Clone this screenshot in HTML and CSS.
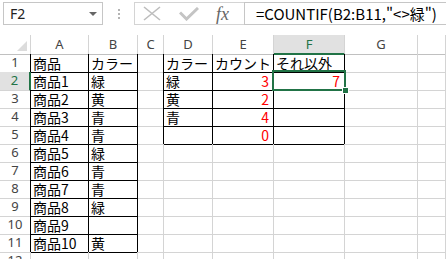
FILE: index.html
```html
<!DOCTYPE html>
<html lang="ja">
<head>
    <meta charset="UTF-8">
    <title>COUNTIF</title>
    <link rel="stylesheet" href="styles.css">
</head>
<body>
    <div class="toolbar">
        <div class="namebox">
            <span>F2</span>
            <svg width="8" height="4" viewBox="0 0 8 4"><path d="M0 0H8L4 4Z" fill="#666"/></svg>
        </div>
        <div class="grip">
            <svg width="2" height="10" viewBox="0 0 2 10"><rect y="0" width="2" height="2" fill="#b4b4b4"/><rect y="4" width="2" height="2" fill="#b4b4b4"/><rect y="8" width="2" height="2" fill="#b4b4b4"/></svg>
        </div>
        <div class="fbuttons">
            <svg class="btn-x" width="18" height="15" viewBox="0 0 18 15"><path d="M1 1L17 14M17 1L1 14" stroke="#bdbdbd" stroke-width="1.6" fill="none"/></svg>
            <svg class="btn-ok" width="20" height="14" viewBox="0 0 20 14"><path d="M1 5.5L7.5 12L19 1" stroke="#c4c4c4" stroke-width="3" fill="none"/></svg>
            <span class="fx">fx</span>
        </div>
        <div class="formula">=COUNTIF(B2:B11,"&lt;&gt;緑")</div>
    </div>

    <div class="sheet">
        <div class="row head">
            <div class="rh corner"><svg width="10" height="10" viewBox="0 0 10 10"><path d="M10 0V10H0Z" fill="#dcdcdc"/></svg></div>
            <div class="ch">A</div><div class="ch">B</div><div class="ch">C</div><div class="ch">D</div>
            <div class="ch">E</div><div class="ch on">F</div><div class="ch">G</div><div class="ch"></div>
        </div>
        <div class="row">
            <div class="rh kr">1</div>
            <div class="c k">商品</div><div class="c k">カラー</div><div class="c kr"></div>
            <div class="c k">カラー</div><div class="c k">カウント</div><div class="c k">それ以外</div>
            <div class="c"></div><div class="c"></div>
        </div>
        <div class="row">
            <div class="rh on">2</div>
            <div class="c k">商品1</div><div class="c k">緑</div><div class="c kr"></div>
            <div class="c k">緑</div><div class="c k num">3</div>
            <div class="c k num cur">7<span class="sel"><span class="handle"></span></span></div>
            <div class="c"></div><div class="c"></div>
        </div>
        <div class="row">
            <div class="rh kr">3</div>
            <div class="c k">商品2</div><div class="c k">黄</div><div class="c kr"></div>
            <div class="c k">黄</div><div class="c k num">2</div><div class="c k"></div>
            <div class="c"></div><div class="c"></div>
        </div>
        <div class="row">
            <div class="rh kr">4</div>
            <div class="c k">商品3</div><div class="c k">青</div><div class="c kr"></div>
            <div class="c k">青</div><div class="c k num">4</div><div class="c k"></div>
            <div class="c"></div><div class="c"></div>
        </div>
        <div class="row">
            <div class="rh kr">5</div>
            <div class="c k">商品4</div><div class="c k">青</div><div class="c kr"></div>
            <div class="c k"></div><div class="c k num">0</div><div class="c k"></div>
            <div class="c"></div><div class="c"></div>
        </div>
        <div class="row">
            <div class="rh kr">6</div>
            <div class="c k">商品5</div><div class="c k">緑</div><div class="c"></div>
            <div class="c"></div><div class="c"></div><div class="c"></div><div class="c"></div><div class="c"></div>
        </div>
        <div class="row">
            <div class="rh kr">7</div>
            <div class="c k">商品6</div><div class="c k">青</div><div class="c"></div>
            <div class="c"></div><div class="c"></div><div class="c"></div><div class="c"></div><div class="c"></div>
        </div>
        <div class="row">
            <div class="rh kr">8</div>
            <div class="c k">商品7</div><div class="c k">青</div><div class="c"></div>
            <div class="c"></div><div class="c"></div><div class="c"></div><div class="c"></div><div class="c"></div>
        </div>
        <div class="row">
            <div class="rh kr">9</div>
            <div class="c k">商品8</div><div class="c k">緑</div><div class="c"></div>
            <div class="c"></div><div class="c"></div><div class="c"></div><div class="c"></div><div class="c"></div>
        </div>
        <div class="row">
            <div class="rh kr">10</div>
            <div class="c k">商品9</div><div class="c k"></div><div class="c"></div>
            <div class="c"></div><div class="c"></div><div class="c"></div><div class="c"></div><div class="c"></div>
        </div>
        <div class="row">
            <div class="rh kr">11</div>
            <div class="c k">商品10</div><div class="c k">黄</div><div class="c"></div>
            <div class="c"></div><div class="c"></div><div class="c"></div><div class="c"></div><div class="c"></div>
        </div>
        <div class="row">
            <div class="rh">12</div>
            <div class="c"></div><div class="c"></div><div class="c"></div>
            <div class="c"></div><div class="c"></div><div class="c"></div><div class="c"></div><div class="c"></div>
        </div>
    </div>
</body>
</html>
```

FILE: styles.css
```css
body {
    margin: 0;
    width: 446px;
    height: 259px;
    overflow: hidden;
    background-color: #fff;
    font-family: "Noto Sans CJK JP", sans-serif;
    color: #000;
}

/* formula bar */
.toolbar {
    display: flex;
    align-items: flex-start;
    height: 35px;
    padding-top: 2px;
    box-sizing: border-box;
}
.namebox {
    margin-left: 3px;
    width: 100px;
    height: 23px;
    border: 1px solid #c6c6c6;
    box-sizing: border-box;
    display: flex;
    align-items: center;
    justify-content: space-between;
    padding: 0 5px 0 6px;
    font-family: "Noto Sans", sans-serif;
    font-size: 14px;
    color: #222;
}
.grip {
    width: 31px;
    height: 23px;
    display: flex;
    align-items: center;
    justify-content: center;
}
.fbuttons {
    width: 110px;
    height: 23px;
    border: 1px solid #d4d4d4;
    border-right: none;
    box-sizing: border-box;
    display: flex;
    align-items: center;
    padding-left: 8px;
}
.btn-x {
    margin-right: 18px;
}
.btn-ok {
    margin-right: 17px;
    margin-top: 1px;
}
.fx {
    font-family: "Liberation Serif", serif;
    font-style: italic;
    font-size: 18px;
    color: #666;
    line-height: 18px;
}
.formula {
    flex: 1;
    height: 23px;
    border: 1px solid #c6c6c6;
    border-right: none;
    box-sizing: border-box;
    padding-left: 11px;
    font-size: 15px;
    line-height: 21px;
    white-space: nowrap;
}

/* grid */
.row {
    display: grid;
    grid-template-columns: 31px 58px 49px 26px 49px 61px 71px 73px 1fr;
    height: 18px;
}
.row.head {
    height: 19px;
}
.row > div {
    box-sizing: border-box;
    border-right: 1px solid #d4d4d4;
    border-bottom: 1px solid #d4d4d4;
}
.head > div {
    border-bottom-color: #c0c0c0;
}
.rh, .ch {
    font-family: "Noto Sans", sans-serif;
    font-size: 13px;
    color: #444;
    text-align: center;
    line-height: 17px;
}
.ch {
    line-height: 18px;
}
.corner {
    display: flex;
    align-items: flex-end;
    justify-content: flex-end;
    padding: 0 3px 3px 0;
}
.ch.on {
    background-color: #e1e1e1;
    color: #217346;
    border-bottom: 2px solid #217346;
}
.rh.on {
    background-color: #e1e1e1;
    color: #217346;
    border-right: 2px solid #217346;
}
.c {
    font-size: 14px;
    line-height: 18px;
    padding-left: 2px;
    white-space: nowrap;
}
.row > .k {
    border-right-color: #000;
    border-bottom-color: #000;
}
.row > .kr {
    border-right-color: #000;
}
.num {
    text-align: right;
    color: #f00;
    padding-right: 4px;
}
.cur {
    position: relative;
}
.sel {
    position: absolute;
    left: -2px;
    top: -2px;
    right: -2px;
    bottom: -1px;
    border: 2px solid #217346;
}
.handle {
    position: absolute;
    right: -5px;
    bottom: -5px;
    width: 5px;
    height: 5px;
    background-color: #217346;
    border: 1px solid #fff;
}
```
